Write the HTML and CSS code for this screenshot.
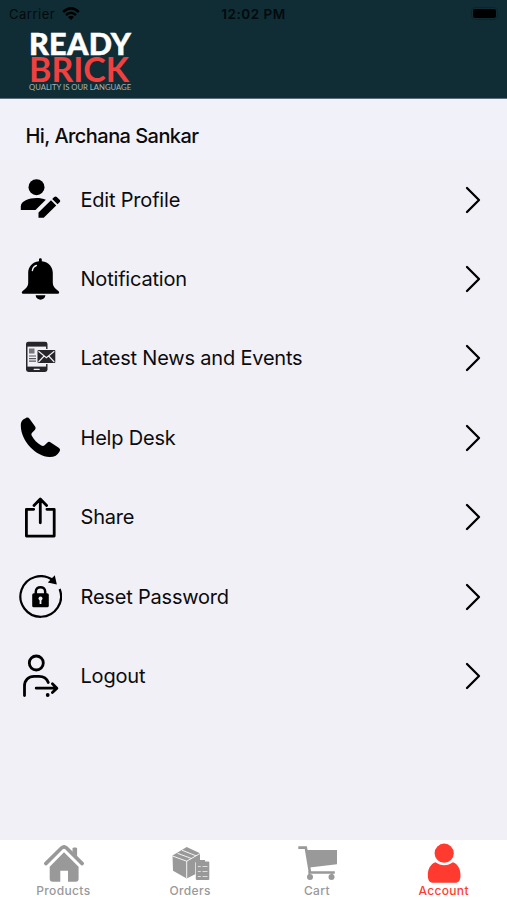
FILE: index.html
```
<!DOCTYPE html>
<html lang="en">
<head>
    <meta charset="UTF-8">
    <meta name="viewport" content="width=device-width, initial-scale=1.0">
    <title>Ready Brick - Account</title>
    <link rel="stylesheet" href="styles.css">
</head>
<body>
    <div class="app">
        <header class="header">
            <div class="status-bar">
                <div class="carrier">
                    <span>Carrier</span>
                    <svg class="wifi" viewBox="0 0 18 13">
                        <path d="M1.2 5Q9-2.2 16.8 5M4 8Q9 3.6 14 8" fill="none" stroke="#000" stroke-width="2.5"/>
                        <path d="M6 10Q9 7.4 12 10L9 13z"/>
                    </svg>
                </div>
                <span class="time">12:02 PM</span>
                <div class="battery"><span class="battery-level"></span></div>
            </div>
            <div class="logo">
                <span class="logo-ready">READY</span>
                <span class="logo-brick">BRICK</span>
                <span class="logo-tagline">QUALITY IS OUR LANGUAGE</span>
            </div>
        </header>

        <main class="content">
            <h1 class="greeting">Hi, Archana Sankar</h1>
            <ul class="menu">
                <li class="menu-item">
                    <svg class="menu-icon" viewBox="0 0 44 44">
                        <circle cx="18.5" cy="9.2" r="8"/>
                        <path d="M2.8 32v-3.6c0-5.3 8-8.4 15.7-8.4 3.4 0 6.6.6 9.3 1.7L17.5 32z"/>
                        <path d="M20.5 39.8v-5.2L33 22.2l5.2 5.2-12.5 12.4zM34.2 21l2-2c.8-.8 1.8-.8 2.6 0l2.8 2.8c.8.8.8 1.7 0 2.5l-2.1 2z"/>
                    </svg>
                    <span class="menu-label">Edit Profile</span>
                    <svg class="chevron" viewBox="0 0 16 28"><path d="M2 2l12 12L2 26"/></svg>
                </li>
                <li class="menu-item">
                    <svg class="menu-icon" viewBox="0 0 44 44">
                        <path d="M21 4.2V2.500c0-1.6 2.800-1.6 2.800 0v1.700C31 5 34.800 10 34.800 16v10c0 3.300 2.200 5.700 5.200 7.700 1.800 1.200 1.400 3-.4 3H5.400c-1.800 0-2.200-1.800-.4-3 3-2 5.200-4.400 5.200-7.700V16c0-6 3.800-11 10.800-11.800z"/>
                        <path d="M17.600 38.300h9.800c-.5 5.800-9.300 5.800-9.800 0z"/>
                        <path d="M14.400 13.500c.4-2.500 1.800-4.300 4-5" fill="none" stroke="#f1f0f6" stroke-width="1.4" stroke-linecap="round"/>
                    </svg>
                    <span class="menu-label">Notification</span>
                    <svg class="chevron" viewBox="0 0 16 28"><path d="M2 2l12 12L2 26"/></svg>
                </li>
                <li class="menu-item">
                    <svg class="menu-icon" viewBox="0 0 44 44">
                        <rect x="8" y="5.7" width="21.5" height="30.2" rx="2.4" fill="#25252a"/>
                        <path d="M9.5 10.6h18.6v20H9.500z" fill="#f1f0f6"/>
                        <path d="M16.200 33.300h5" stroke="#f1f0f6" stroke-width="1.3" stroke-linecap="round"/>
                        <path d="M11 12.500h5.500v5H11z" fill="#77777c"/>
                        <path d="M11 20h7M11 22.600h7M11 25.200h7" stroke="#55555a" stroke-width="1.2"/>
                        <path d="M18.300 13h20v15h-20z" fill="#f1f0f6"/>
                        <rect x="19.5" y="14" width="17.8" height="13" rx="1" fill="#25252a"/>
                        <path d="M20.500 15.300l7.900 6.400 7.900-6.400M20.500 26l5.600-6M36.300 26l-5.600-6" fill="none" stroke="#f1f0f6" stroke-width="1.1"/>
                    </svg>
                    <span class="menu-label">Latest News and Events</span>
                    <svg class="chevron" viewBox="0 0 16 28"><path d="M2 2l12 12L2 26"/></svg>
                </li>
                <li class="menu-item">
                    <svg class="menu-icon" viewBox="0 0 44 44">
                        <path d="M5.200 3.500L8 1.900c1.300-.7 2.600-.3 3.500.9l5.600 7.800c.8 1.200.7 2.400-.3 3.400l-2.500 2.400c-1 1-1.100 2.100-.5 3.300 1.900 3.800 5.400 7.400 9.500 9.900 1.200.7 2.400.6 3.300-.3l2.600-2.600c1-1 2.300-1.100 3.500-.3l8 5.300c1.300.9 1.700 2.200 1 3.500-2 4-5.500 6-10.200 5.900C18 40.600 2.900 25 2.800 9.800c0-2.800.5-4.800 2.400-6.300z"/>
                    </svg>
                    <span class="menu-label">Help Desk</span>
                    <svg class="chevron" viewBox="0 0 16 28"><path d="M2 2l12 12L2 26"/></svg>
                </li>
                <li class="menu-item">
                    <svg class="menu-icon line" viewBox="0 0 44 44">
                        <path d="M15.700 14.300H8.400v26.800h27.800V14.300h-7.300M22.300 27.800V4.500M16 10.400l6.300-6.400 6.300 6.400"/>
                    </svg>
                    <span class="menu-label">Share</span>
                    <svg class="chevron" viewBox="0 0 16 28"><path d="M2 2l12 12L2 26"/></svg>
                </li>
                <li class="menu-item">
                    <svg class="menu-icon" viewBox="0 0 44 44">
                        <path d="M35.500 5.700A20.300 20.300 0 1 0 41.600 14" fill="none" stroke="#000" stroke-width="2.2"/>
                        <path d="M36.800.3l2 9.300-9-2z"/>
                        <rect x="14.2" y="18.3" width="16.6" height="14" rx="1.6"/>
                        <path d="M17.800 19v-2.300c0-6 9.400-6 9.400 0V19" fill="none" stroke="#000" stroke-width="2.5"/>
                        <circle cx="22.5" cy="23.5" r="2" fill="#f1f0f6"/>
                        <path d="M21.600 24h1.800v5h-1.800z" fill="#f1f0f6"/>
                    </svg>
                    <span class="menu-label">Reset Password</span>
                    <svg class="chevron" viewBox="0 0 16 28"><path d="M2 2l12 12L2 26"/></svg>
                </li>
                <li class="menu-item">
                    <svg class="menu-icon line" viewBox="0 0 44 44">
                        <circle cx="18.3" cy="9" r="7"/>
                        <path d="M6.500 41.500V32c0-6 4-9.700 9.500-9.700h5c4.500 0 8 2.500 9.300 6.200M18.200 34.200h20M34.400 29.800l4.500 4.400-4.500 4.400"/>
                        <circle class="dot" cx="29.7" cy="41" r="1.9"/>
                    </svg>
                    <span class="menu-label">Logout</span>
                    <svg class="chevron" viewBox="0 0 16 28"><path d="M2 2l12 12L2 26"/></svg>
                </li>
            </ul>
        </main>

        <nav class="tab-bar">
            <a class="tab">
                <svg class="tab-icon" viewBox="0 0 44 42">
                    <path d="M4.800 21.600L20.500 6c1.700-1.600 3.400-1.600 5 0l15.700 15.600" fill="none" stroke="currentColor" stroke-width="3.6" stroke-linecap="round"/>
                    <path d="M31.500 6.500c0-1.300 4.600-1.300 4.600 0v8l-4.600-4.600z"/>
                    <path d="M23 10.200l14.600 14.500v12c0 2-1 3-3 3H27v-11h-7.700v11h-7.600c-2 0-3-1-3-3v-12z"/>
                </svg>
                <span>Products</span>
            </a>
            <a class="tab">
                <svg class="tab-icon" viewBox="0 0 44 42">
                    <path d="M4.500 13.500L18.700 5 32 11.200v9h-4.800v12L18.700 36.500 5 28.700z"/>
                    <path d="M4.500 14l14.200 5.200L32 11.500M18.700 19v17M9.500 11.300l14 5.200M14 8.200l14 5.600" fill="none" stroke="#fff" stroke-width=".9"/>
                    <rect x="27.8" y="19.5" width="13.5" height="18.5" rx="1"/>
                    <path d="M31.500 18h5.500v3h-5.500z"/>
                    <path d="M29.800 24.500h3M29.800 29.500h3M29.800 34.500h3M34.500 24.500h5M34.500 29.500h5M34.500 34.500h5" fill="none" stroke="#ddd" stroke-width="1.2"/>
                </svg>
                <span>Orders</span>
            </a>
            <a class="tab">
                <svg class="tab-icon" viewBox="0 0 44 42">
                    <path d="M3.300 5.600h7.500L15 30.500h24.800" fill="none" stroke="currentColor" stroke-width="2.6"/>
                    <path d="M11.500 8H42v14.300l-27.500 3.200z"/>
                    <path d="M14.200 29v6M37 30v5" stroke="currentColor" stroke-width="1.5"/>
                    <circle cx="15" cy="35" r="3"/>
                    <circle cx="36.5" cy="35" r="3"/>
                </svg>
                <span>Cart</span>
            </a>
            <a class="tab active">
                <svg class="tab-icon" viewBox="0 0 44 42">
                    <circle cx="22.2" cy="11.2" r="9.6"/>
                    <path d="M13.500 20.200c5.500 4 12 4 17.400 0 4.800 1.500 7.600 6.800 7.600 13 0 5-1.700 7.500-5.500 7.500H11.400c-3.900 0-5.600-2.500-5.600-7.500 0-6.200 2.800-11.500 7.700-13z"/>
                </svg>
                <span>Account</span>
            </a>
        </nav>
    </div>
</body>
</html>
```
FILE: styles.css
```
:root {
    --header-color: #102d35;
    --page-color: #f1f0f6;
    --accent-color: #ff3b30;
    --muted-color: #999999;
}

* {
    margin: 0;
    padding: 0;
    box-sizing: border-box;
}

body {
    font-family: 'Inter', 'Liberation Sans', sans-serif;
    background: var(--page-color);
    color: #0b0b0e;
}

.app {
    height: 900px;
    display: flex;
    flex-direction: column;
}

.header {
    height: 99px;
    background: var(--header-color);
    border-bottom: 1px solid #5c6e77;
}

.status-bar {
    height: 27px;
    padding: 0 9px;
    display: grid;
    grid-template-columns: 1fr auto 1fr;
    align-items: center;
    color: #020a0d;
    font-size: 13px;
}

.carrier {
    display: flex;
    align-items: center;
    gap: 7px;
    letter-spacing: 0.5px;
}

.wifi {
    width: 18px;
    height: 13px;
}

.time {
    font-size: 13.5px;
    font-weight: 600;
    letter-spacing: 0.5px;
}

.battery {
    justify-self: end;
    width: 27px;
    height: 13px;
    padding: 1px;
    border: 1px solid #0d252a;
    border-radius: 4px;
}

.battery-level {
    display: block;
    height: 100%;
    background: #000;
    border-radius: 2px;
}

.logo {
    margin-left: 29px;
    padding-top: 5px;
    display: flex;
    flex-direction: column;
    font-family: 'Lato', sans-serif;
    white-space: nowrap;
}

.logo-ready {
    color: #fff;
    font-size: 30.5px;
    line-height: 22px;
    font-weight: 900;
    letter-spacing: 0.3px;
    -webkit-text-stroke: 0.5px #fff;
}

.logo-brick {
    color: #f0403f;
    margin-top: 2px;
    font-size: 34px;
    line-height: 25px;
    font-weight: 700;
}

.logo-tagline {
    margin-top: 3px;
    color: #a9b4b6;
    font-size: 7.7px;
    line-height: 7px;
}

.content {
    flex: 1;
}

.greeting {
    height: 61px;
    padding: 13px 25.5px 0;
    display: flex;
    align-items: center;
    background: #f1f2f9;
    font-size: 20px;
    font-weight: 500;
    line-height: 24px;
    letter-spacing: -0.55px;
}

.menu {
    list-style: none;
}

.menu-item {
    height: 79.4px;
    padding: 0 26px 0 18px;
    display: flex;
    align-items: center;
}

.menu-icon {
    width: 44px;
    height: 44px;
    margin-right: 18.5px;
}

.line {
    fill: none;
    stroke: #000;
    stroke-width: 2.8;
    stroke-linecap: round;
    stroke-linejoin: round;
}

.dot {
    fill: #000;
    stroke: none;
}

.menu-label {
    flex: 1;
    font-size: 20px;
    line-height: 24px;
    letter-spacing: -0.2px;
}

.chevron {
    width: 16px;
    height: 28px;
    fill: none;
    stroke: #000;
    stroke-width: 2.3;
    stroke-linecap: round;
    stroke-linejoin: round;
}

.tab-bar {
    height: 60px;
    display: grid;
    grid-template-columns: repeat(4, 1fr);
    background: #fff;
}

.tab {
    display: flex;
    flex-direction: column;
    align-items: center;
    padding-top: 2px;
    color: var(--muted-color);
    font-size: 12px;
    font-weight: 500;
    line-height: 16px;
    letter-spacing: 0.35px;
}

.tab.active {
    color: var(--accent-color);
}

.tab-icon {
    width: 44px;
    height: 42px;
    margin-bottom: -1px;
    fill: currentColor;
}
```
